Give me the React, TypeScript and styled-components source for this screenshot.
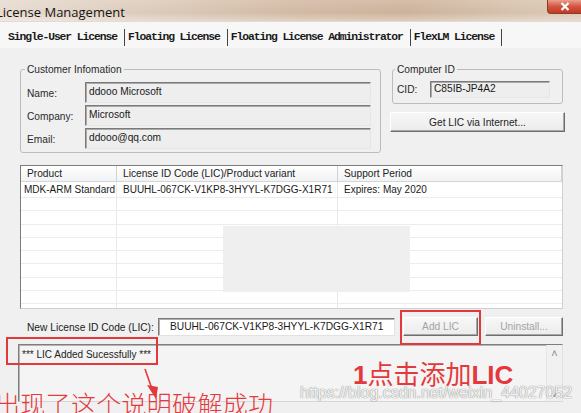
import styled, { createGlobalStyle } from "styled-components";

const GlobalStyle = createGlobalStyle`
  html, body {
    margin: 0;
    padding: 0;
    background: #f0f0f0;
  }
  body {
    font-family: "Liberation Sans", Arial, sans-serif;
  }
  * {
    box-sizing: border-box;
  }
`;

const tabs = [
  "Single-User License",
  "Floating License",
  "Floating License Administrator",
  "FlexLM License",
];

const customer = [
  { label: "Name:", value: "ddooo Microsoft" },
  { label: "Company:", value: "Microsoft" },
  { label: "Email:", value: "ddooo@qq.com" },
];

const LIC = "BUUHL-067CK-V1KP8-3HYYL-K7DGG-X1R71";

function App() {
  return (
    <>
      <GlobalStyle />
      <Window>
        <TitleBar>
          <Title>License Management</Title>
          <CloseButton>
            <svg width="10" height="9" viewBox="0 0 10 9">
              <path d="M1.5 1 L8.5 8 M8.5 1 L1.5 8" stroke="#fff" strokeWidth="2.2" />
            </svg>
          </CloseButton>
        </TitleBar>

        <TabStrip>
          {tabs.map((tab) => (
            <Tab key={tab}>{tab}</Tab>
          ))}
        </TabStrip>

        <Panel>
          <TopRow>
            <CustomerBox>
              <Legend>Customer Infomation</Legend>
              <FieldGrid>
                {customer.map((f) => (
                  <Field key={f.label}>
                    <FieldLabel>{f.label}</FieldLabel>
                    <ValueBox>{f.value}</ValueBox>
                  </Field>
                ))}
              </FieldGrid>
            </CustomerBox>

            <RightColumn>
              <ComputerBox>
                <Legend>Computer ID</Legend>
                <CidRow>
                  <CidLabel>CID:</CidLabel>
                  <CidBox>C85IB-JP4A2</CidBox>
                </CidRow>
              </ComputerBox>
              <Button>Get LIC via Internet...</Button>
            </RightColumn>
          </TopRow>

          <ListView>
            <ListHeader>
              <HeaderCell>Product</HeaderCell>
              <HeaderCell>License ID Code (LIC)/Product variant</HeaderCell>
              <HeaderCell>Support Period</HeaderCell>
            </ListHeader>
            <ListRow $tall>
              <Cell>MDK-ARM Standard</Cell>
              <Cell>{LIC}</Cell>
              <Cell>Expires: May 2020</Cell>
            </ListRow>
            {Array.from({ length: 9 }).map((_, i) => (
              <ListRow key={i}>
                <Cell />
                <Cell />
                <Cell />
              </ListRow>
            ))}
            <Smudge />
          </ListView>

          <LicRow>
            <LicLabel>New License ID Code (LIC):</LicLabel>
            <LicInput>{LIC}</LicInput>
            <Button $disabled $width={75} $gap={8}>
              Add LIC
            </Button>
            <Button $disabled $width={78} $gap={7}>
              Uninstall...
            </Button>
          </LicRow>

          <OutputArea>
            <StatusText>*** LIC Added Sucessfully ***</StatusText>
            <ScrollBar>
              <Arrow>&#x02C4;</Arrow>
              <Arrow>&#x02C5;</Arrow>
            </ScrollBar>
          </OutputArea>
        </Panel>

        {/* red annotations drawn over the screenshot */}
        <RedBox $x={6} $y={337} $w={152} $h={28} />
        <RedBox $x={400} $y={310} $w={81} $h={35} />
        <ArrowMark width="30" height="40" viewBox="0 0 30 40">
          <path d="M4 2 L11 22" stroke="#e4393c" strokeWidth="1.6" />
          <path d="M6 18 L17 20 L15 32 Z" fill="#e4393c" />
        </ArrowMark>
        <StepNote>
          <b>1</b>点击添加<b>LIC</b>
        </StepNote>
        <SuccessNote>出现了这个说明破解成功</SuccessNote>
        <Watermark>https://blog.csdn.net/weixin_44027052</Watermark>
      </Window>
    </>
  );
}

const Window = styled.div`
  position: relative;
  width: 581px;
  height: 413px;
  overflow: hidden;
  background: #f0f0f0;
  display: flex;
  flex-direction: column;
  font-size: 10.2px;
  color: #222;
`;

const TitleBar = styled.div`
  flex: none;
  height: 22px;
  display: flex;
  justify-content: space-between;
  align-items: flex-start;
  background:
    linear-gradient(180deg, rgba(255, 255, 255, 0.15), rgba(255, 255, 255, 0) 60%, rgba(255, 255, 255, 0.35)),
    linear-gradient(90deg, #e7dbcf 0%, #dccbbb 25%, #d2b9a3 50%, #cdb29b 70%, #d6c1ac 88%, #dcc9b6 100%);
  border-bottom: 1px solid #e2dad3;
`;

const Title = styled.div`
  margin: 3px 0 0 -4px;
  font-family: "Open Sans", "Liberation Sans", sans-serif;
  font-size: 13px;
  color: #141414;
`;

const CloseButton = styled.div`
  width: 36px;
  height: 14px;
  margin-right: -2px;
  display: flex;
  align-items: center;
  justify-content: center;
  border: 1px solid #8c3a2e;
  border-top: none;
  border-radius: 0 0 0 4px;
  background: linear-gradient(180deg, #e9a08e 0%, #d3543f 50%, #c23a26 100%);
`;

const TabStrip = styled.div`
  flex: none;
  height: 26px;
  display: flex;
  align-items: center;
  padding: 4px 0 0 8px;
  background: #f7f7f7;
`;

const Tab = styled.div`
  font-family: "Liberation Mono", "DejaVu Sans Mono", monospace;
  font-weight: bold;
  font-size: 11.4px;
  letter-spacing: -1.1px;
  line-height: 17px;
  color: #1a1a1a;
  padding-right: 7px;
  margin-right: 3px;
  border-right: 1px solid #444;
`;

const Panel = styled.div`
  flex: 1;
  display: flex;
  flex-direction: column;
  padding: 15px 16px 0 20px;
`;

const TopRow = styled.div`
  display: flex;
  align-items: flex-start;
  gap: 9px;
`;

const GroupBox = styled.fieldset`
  margin: 0;
  min-width: 0;
  border: 1px solid #bcbcbc;
  border-radius: 3px;
`;

const CustomerBox = styled(GroupBox)`
  width: 361px;
  padding: 6px 9px 3px 6px;
`;

const ComputerBox = styled(GroupBox)`
  margin: 0 2px;
  padding: 5px 12px 5px 4px;
`;

const Legend = styled.legend`
  margin-left: -2px;
  padding: 0 2px;
  font-size: 10.2px;
  line-height: 13px;
  color: #2a2a2a;
`;

const FieldGrid = styled.div`
  display: flex;
  flex-direction: column;
  gap: 2px;
`;

const Field = styled.div`
  display: grid;
  grid-template-columns: 58px 1fr;
`;

const FieldLabel = styled.div`
  padding-top: 6px;
  color: #2a2a2a;
`;

const ValueBox = styled.div`
  height: 21px;
  padding: 1px 3px;
  line-height: 16px;
  background: #eeeeee;
  border: 1px solid;
  border-color: #7a7a7a #e6e6e6 #e6e6e6 #7a7a7a;
  box-shadow: inset 1px 1px 0 #a9a9a9;
  color: #1a1a1a;
`;

const RightColumn = styled.div`
  flex: 1;
  display: flex;
  flex-direction: column;
  gap: 8px;
`;

const CidRow = styled.div`
  display: flex;
  align-items: center;
`;

const CidLabel = styled.div`
  width: 33px;
  color: #2a2a2a;
`;

const CidBox = styled(ValueBox)`
  width: 120px;
  height: 17px;
  padding: 0 3px;
  line-height: 14px;
`;

const Button = styled.div<{ $disabled?: boolean; $width?: number; $gap?: number }>`
  height: ${(p) => (p.$width ? 19 : 20)}px;
  ${(p) => (p.$width ? `width: ${p.$width}px; flex: none;` : "")}
  margin-left: ${(p) => p.$gap ?? 0}px;
  display: flex;
  align-items: center;
  justify-content: center;
  background: linear-gradient(180deg, #f7f7f7, #ececec);
  border: 1px solid;
  border-color: #ffffff #6e6e6e #6e6e6e #ffffff;
  box-shadow: inset -1px -1px 0 #a8a8a8;
  color: ${(p) => (p.$disabled ? "#a3a3a3" : "#1e1e1e")};
`;

const ListView = styled.div`
  position: relative;
  margin: 12px 2px 0 0;
  height: 144px;
  overflow: hidden;
  background: #ffffff;
  border: 1px solid;
  border-color: #7c7c7c #d0d0d0 #d0d0d0 #7c7c7c;
`;

const columns = "96px 221px 1fr";

const ListHeader = styled.div`
  display: grid;
  grid-template-columns: ${columns};
  height: 16px;
  background: linear-gradient(180deg, #ffffff, #f1f2f4);
  border-bottom: 1px solid #d5d5d5;
`;

const HeaderCell = styled.div`
  padding-left: 6px;
  line-height: 15px;
  border-right: 1px solid #d2d2d2;
  color: #222;
  white-space: nowrap;
`;

const ListRow = styled.div<{ $tall?: boolean }>`
  display: grid;
  grid-template-columns: ${columns};
  height: ${(p) => (p.$tall ? 16 : 13.3)}px;
  border-bottom: 1px solid #ececec;
`;

const Cell = styled.div`
  padding-left: 3px;
  font-size: 10px;
  line-height: 15px;
  white-space: nowrap;
  color: #1a1a1a;
  border-right: 1px solid #e8e8e8;

  & + & {
    padding-left: 6px;
  }
  &:last-child {
    border-right: none;
  }
`;

const Smudge = styled.div`
  position: absolute;
  left: 202px;
  top: 60px;
  width: 187px;
  height: 66px;
  background: #efefef;
`;

const LicRow = styled.div`
  margin-top: 8px;
  height: 19px;
  display: flex;
  align-items: center;
`;

const LicLabel = styled.div`
  width: 138px;
  padding-left: 7px;
  padding-top: 2px;
  white-space: nowrap;
  color: #222;
`;

const LicInput = styled.div`
  width: 237px;
  height: 18px;
  padding-left: 11px;
  line-height: 15px;
  background: #ffffff;
  border: 1px solid;
  border-color: #7a7a7a #e2e2e2 #e2e2e2 #7a7a7a;
  box-shadow: inset 1px 1px 0 #b0b0b0;
  color: #1a1a1a;
  white-space: nowrap;
  overflow: hidden;
`;

const OutputArea = styled.div`
  margin: 8px 2px 0 -2px;
  height: 58px;
  display: flex;
  background: #f4f4f4;
  border: 1px solid;
  border-color: #7e7e7e #e0e0e0 #d6d6d6 #7e7e7e;
  box-shadow: inset 1px 1px 0 #b4b4b4;
`;

const StatusText = styled.div`
  flex: 1;
  padding: 3px 0 0 3px;
  font-size: 10px;
  line-height: 13px;
  color: #222;
`;

const ScrollBar = styled.div`
  width: 16px;
  display: flex;
  flex-direction: column;
  justify-content: space-between;
  align-items: center;
  padding: 3px 0 2px;
  border-left: 1px solid #e6e6e6;
  background: #f1f1f1;
`;

const Arrow = styled.span`
  font-size: 11px;
  line-height: 10px;
  color: #8a8a8a;
`;

const RedBox = styled.div<{ $x: number; $y: number; $w: number; $h: number }>`
  position: absolute;
  left: ${(p) => p.$x}px;
  top: ${(p) => p.$y}px;
  width: ${(p) => p.$w}px;
  height: ${(p) => p.$h}px;
  border: 2.5px solid #e4393c;
`;

const ArrowMark = styled.svg`
  position: absolute;
  left: 141px;
  top: 367px;
`;

const StepNote = styled.div`
  position: absolute;
  left: 353px;
  top: 359px;
  font-family: "Noto Sans CJK SC", sans-serif;
  font-size: 26px;
  line-height: 28px;
  color: #e4393c;
  white-space: nowrap;

  b {
    font-family: "Liberation Sans", Arial, sans-serif;
    font-weight: bold;
  }
`;

const SuccessNote = styled.div`
  position: absolute;
  left: -5px;
  top: 388px;
  font-family: "Noto Sans CJK SC", sans-serif;
  font-weight: 300;
  font-size: 25px;
  line-height: 30px;
  letter-spacing: 0.3px;
  color: #e5393e;
  white-space: nowrap;
`;

const Watermark = styled.div`
  position: absolute;
  left: 300px;
  top: 383px;
  font-family: "Liberation Sans", Arial, sans-serif;
  font-size: 16px;
  line-height: 20px;
  color: rgba(255, 255, 255, 0.92);
  text-shadow:
    0 0 1px rgba(110, 110, 110, 0.7),
    0 0 1px rgba(110, 110, 110, 0.7);
  white-space: nowrap;
`;

export default App;
